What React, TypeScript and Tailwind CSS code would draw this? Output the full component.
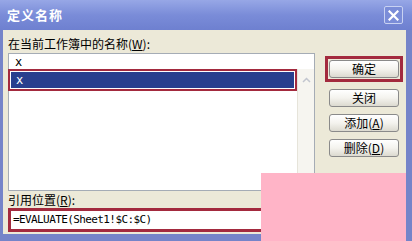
import React from "react";

const cjk = { fontFamily: '"Noto Sans CJK SC", "Noto Sans", sans-serif' };
const mono = { fontFamily: '"DejaVu Sans Mono", "Liberation Mono", monospace' };

function Btn({ label, red }: { label: React.ReactNode; red?: boolean }) {
  return (
    <div className={red ? "border-[3px] border-[#a32a3e] p-[1px] -mx-[4px]" : ""}>
      <div
        className="h-[18px] w-[70px] rounded-[3px] border border-[#8a8a8a] bg-gradient-to-b from-white via-[#f4f3ee] to-[#dcdad0] flex items-center justify-center text-[12px] leading-none text-black"
        style={cjk}
      >
        {label}
      </div>
    </div>
  );
}

export default function App() {
  return (
    <div className="relative w-[412px] h-[241px] overflow-hidden bg-[#6f7fc6]">
      <div className="flex flex-col h-full border-l-[3px] border-r-[6px] border-b-[7px] border-[#7584c9]">
        {/* title bar */}
        <div className="h-[30px] -mr-[6px] -ml-[3px] flex items-center justify-between pl-[7px] pr-[9px] bg-gradient-to-b from-[#97a7e6] via-[#7a8cd8] to-[#6e80d0]">
          <span className="text-white font-bold text-[13px] tracking-[1px]" style={cjk}>
            定义名称
          </span>
          <div className="w-[19px] h-[18px] rounded-[2px] border border-[#c9d2f2] bg-[#7b8dd8] flex items-center justify-center">
            <svg width="11" height="11" viewBox="0 0 11 11">
              <path d="M1.5 1.5 L9.5 9.5 M9.5 1.5 L1.5 9.5" stroke="white" strokeWidth="2.2" strokeLinecap="square" />
            </svg>
          </div>
        </div>
        {/* body */}
        <div className="flex-1 bg-[#ece9d8] flex pl-[5px]">
          <div className="w-[307px] flex flex-col">
            <div className="mt-[6px] h-[16px] leading-[16px] text-[12px] text-black" style={cjk}>
              在当前工作簿中的名称(<span className="underline">W</span>):
            </div>
            <div className="mt-[1px] h-[138px] border border-[#a5acb5] bg-white flex flex-col">
              <div className="h-[15px] flex items-center pl-[6px] text-[12px] text-black" style={mono}>
                x
              </div>
              <div className="flex-1 flex">
                <div className="flex-1 flex flex-col">
                  <div className="h-[22px] -ml-[1px] border-[2px] border-[#a32a3e] p-[1px] bg-white">
                    <div className="h-full bg-[#283f8e] flex items-center pl-[5px] text-white text-[12px]" style={mono}>
                      x
                    </div>
                  </div>
                </div>
                <div className="w-[17px] bg-[#f6f5f0] border-l border-[#e6e4da] flex flex-col">
                  <div className="h-[17px] flex items-center justify-center mt-[2px]">
                    <svg width="9" height="6" viewBox="0 0 9 6">
                      <path d="M1 5 L4.5 1.5 L8 5" stroke="#c2c6cf" strokeWidth="1.5" fill="none" />
                    </svg>
                  </div>
                </div>
              </div>
            </div>
            <div className="mt-[2px] h-[14px] leading-[14px] text-[12px] text-black" style={cjk}>
              引用位置(<span className="underline">R</span>):
            </div>
            <div className="mt-[1px] h-[24px] w-[262px] border-[3px] border-[#a32a3e] bg-white flex items-center pl-[2px]">
              <span className="text-[11px] tracking-[-0.6px] text-black" style={mono}>
                =EVALUATE(Sheet1!$C:$C)
              </span>
            </div>
          </div>
          <div className="ml-[14px] mt-[26px] flex flex-col gap-[7px]">
            <Btn label="确定" red />
            <Btn label="关闭" />
            <Btn label={<>添加(<span className="underline">A</span>)</>} />
            <Btn label={<>删除(<span className="underline">D</span>)</>} />
          </div>
        </div>
      </div>
      <div className="absolute left-[261px] top-[173px] w-[145px] h-[68px] bg-[#ffb4c7]" />
    </div>
  );
}
